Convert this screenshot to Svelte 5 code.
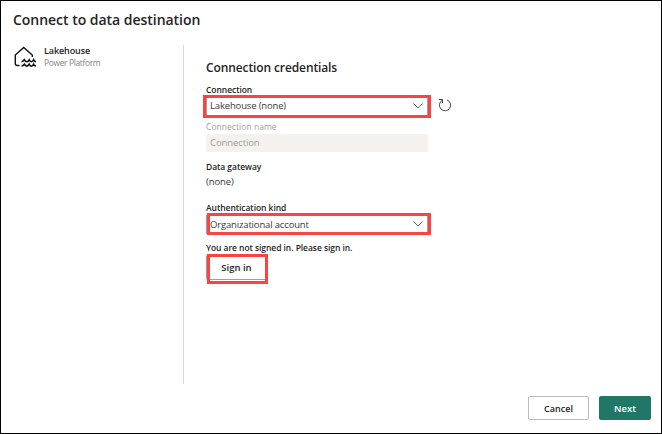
<script>
  const chevron = 'M0.5 0.5 L5 5 L9.5 0.5';
</script>

<div class="dialog">
  <header><h1>Connect to data destination</h1></header>
  <main>
    <aside>
      <svg class="house" width="23" height="22" viewBox="0 0 23 22" fill="none" stroke="#111" stroke-width="1.4">
        <path d="M5.5 19.5H3.2Q1.3 19.5 1.3 17.5V9L9.7 1.5L18.3 9V11" />
        <path stroke-width="1.6" d="M7.5 15.6Q9.2 15.6 10.4 13.8Q11.4 15.7 12.8 15.7T15.2 13.8Q16 15.7 17.4 15.7T19.6 13.8Q20.3 15.6 22 15.6" />
        <path stroke-width="1.6" d="M7.5 20Q9.2 20 10.4 18.2Q11.4 20.1 12.8 20.1T15.2 18.2Q16 20.1 17.4 20.1T19.6 18.2Q20.3 20 22 20" />
      </svg>
      <div class="source">
        <div class="name"><span>Lakehouse</span></div>
        <div class="kind"><span>Power Platform</span></div>
      </div>
    </aside>
    <section>
      <h2><span>Connection credentials</span></h2>
      <div class="label"><span>Connection</span></div>
      <div class="row">
        <div class="select first">
          <span>Lakehouse (none)</span>
          <svg width="10" height="6" viewBox="0 0 10 6"><path d={chevron} fill="none" stroke="#555" stroke-width="0.9" /></svg>
          <i class="mark"></i>
        </div>
        <svg class="refresh" width="14" height="14" viewBox="0 0 14 14" fill="none" stroke="#444" stroke-width="1">
          <path d="M4.4 2.2A5.6 5.6 0 1 0 9 1.9" />
          <path d="M0.8 1.5H4.5V5.2" />
        </svg>
      </div>
      <div class="label muted"><span>Connection name</span></div>
      <div class="input"><span>Connection</span></div>
      <div class="label gateway"><span>Data gateway</span></div>
      <div class="value"><span>(none)</span></div>
      <div class="label auth"><span>Authentication kind</span></div>
      <div class="select second">
        <span>Organizational account</span>
        <svg width="10" height="6" viewBox="0 0 10 6"><path d={chevron} fill="none" stroke="#555" stroke-width="0.9" /></svg>
        <i class="mark"></i>
      </div>
      <div class="label status"><span>You are not signed in. Please sign in.</span></div>
      <button class="signin"><span>Sign in</span><i class="mark"></i></button>
    </section>
  </main>
  <footer>
    <button class="cancel"><span>Cancel</span></button>
    <button class="next"><span>Next</span></button>
  </footer>
</div>

<style>
  .dialog {
    box-sizing: border-box;
    width: 662px;
    height: 434px;
    border: 1px solid #000;
    background: #fff;
    color: #252423;
    font-family: 'Open Sans', 'Noto Sans', sans-serif;
    font-size: 9.5px;
    display: flex;
    flex-direction: column;
    overflow: hidden;
  }
  span { white-space: nowrap; }
  header { height: 44px; padding-left: 12px; flex: none; }
  h1 { margin: 0; padding-top: 9px; font-size: 14px; line-height: 20px; font-weight: 600; letter-spacing: -0.03px; }
  main { display: flex; height: 339px; flex: none; }
  aside { box-sizing: border-box; width: 183px; border-right: 1px solid #d8d8d8; display: flex; padding-left: 13px; }
  .house { margin-top: 1px; flex: none; }
  .source { padding-left: 7px; }
  .name { font-weight: 600; font-size: 9px; line-height: 12px; letter-spacing: -0.1px; }
  .kind { color: #8a8886; line-height: 12px; font-size: 8.5px; letter-spacing: -0.38px; }
  section { padding: 12px 0 0 22px; width: 260px; }
  h2 { margin: 0; font-size: 12px; line-height: 22px; height: 27px; font-weight: 600; letter-spacing: -0.11px; }
  .label { height: 12px; line-height: 12px; font-size: 8.5px; font-weight: 600; letter-spacing: -0.06px; }
  .row { display: flex; align-items: center; height: 21px; gap: 10px; }
  .refresh { margin-bottom: 3px; }
  .select {
    position: relative; box-sizing: border-box; width: 222px; height: 19px;
    border: 1px solid #a19f9d; display: flex; align-items: center;
    justify-content: space-between; padding: 0 4px 2px 3px; flex: none;
    letter-spacing: -0.16px; line-height: 13px; color: #3b3a39;
  }
  .second > span { padding-top: 1px; }
  .mark { position: absolute; box-sizing: border-box; border: 3px solid #fa4343; }
  .first .mark { left: -4px; top: -3px; width: 228px; height: 23px; }
  .second .mark { left: 0; top: -3px; width: 224px; height: 22px; }
  .muted { color: #a19f9d; margin-top: 4px; font-weight: 400; letter-spacing: 0.04px; }
  .input { width: 222px; height: 18px; line-height: 18px; margin-top: 1px; background: #f3f2f1; color: #a19f9d; box-sizing: border-box; padding-left: 4px; border-radius: 1px; letter-spacing: -0.1px; }
  .gateway { margin-top: 9px; }
  .value { height: 14px; line-height: 14px; margin-top: 2px; letter-spacing: -0.1px; color: #3b3a39; }
  .auth { margin-top: 13px; }
  .second { margin-top: 1px; }
  .status { margin-top: 8px; }
  button { font-family: inherit; font-weight: 600; color: #252423; box-sizing: border-box; padding: 0; display: flex; align-items: center; justify-content: center; font-size: 9px; }
  .signin { position: relative; width: 61px; height: 25px; margin-top: 1px; background: #fff; border: 1px solid #a19f9d; border-radius: 1px; font-size: 9.5px; }
  .signin span { margin-top: -1px; }
  .signin .mark { left: 0; top: -2px; width: 61px; height: 30px; }
  footer { display: flex; gap: 10px; justify-content: flex-end; padding: 12px 10px 0 0; }
  .cancel { width: 61px; height: 24px; border: 1px solid #bdbbb9; border-radius: 2px; background: #fff; }
  .next { width: 52px; height: 24px; border: 0; border-radius: 2px; background: #217765; color: #fff; font-size: 9.5px; }
</style>
